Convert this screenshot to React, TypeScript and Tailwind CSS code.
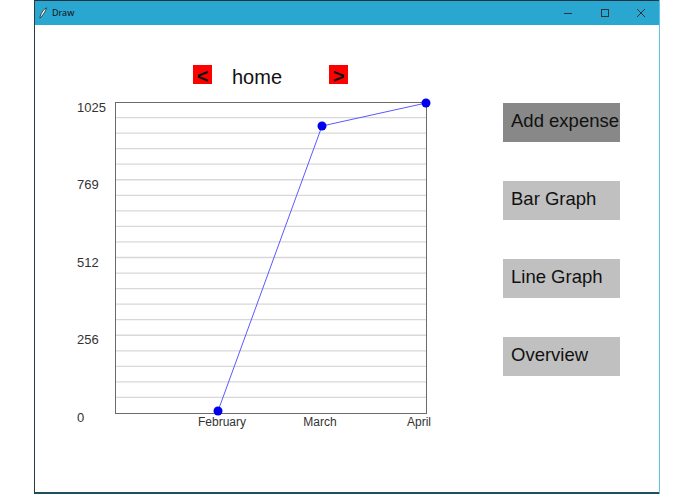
import React from "react";

const yLabels = [
  { text: "1025", y: 16.5 },
  { text: "769", y: 94 },
  { text: "512", y: 171.5 },
  { text: "256", y: 249 },
  { text: "0", y: 326.5 },
];

const months = [
  { text: "February", x: 162 },
  { text: "March", x: 260 },
  { text: "April", x: 359 },
];

const points = [
  { x: 158, y: 316 },
  { x: 262, y: 31 },
  { x: 366, y: 8 },
];

const sideButtons = [
  { label: "Add expense", active: true },
  { label: "Bar Graph", active: false },
  { label: "Line Graph", active: false },
  { label: "Overview", active: false },
];

function LineChart() {
  const top = 7;
  const bottom = 318;
  const left = 55;
  const right = 366;
  const step = (bottom - top) / 20;
  const grid = Array.from({ length: 19 }, (_, i) => top + step * (i + 1));

  return (
    <svg width="380" height="335" className="block" style={{ fontFamily: '"Liberation Sans", Arial, sans-serif' }}>
      {grid.map((y) => (
        <line key={y} x1={left} x2={right} y1={y} y2={y} stroke="#d8d8d8" strokeWidth="1.3" />
      ))}
      <rect x={left + 0.5} y={top + 0.5} width={right - left} height={bottom - top} fill="none" stroke="#6b6b6b" strokeWidth="1" />
      {yLabels.map((l) => (
        <text key={l.text} x="17" y={l.y} fontSize="13" fill="#333">
          {l.text}
        </text>
      ))}
      {months.map((m) => (
        <text key={m.text} x={m.x} y="331" fontSize="12" fill="#333" textAnchor="middle">
          {m.text}
        </text>
      ))}
      <polyline
        points={points.map((p) => `${p.x},${p.y}`).join(" ")}
        fill="none"
        stroke="#5a5aff"
        strokeWidth="1"
      />
      {points.map((p) => (
        <circle key={p.x} cx={p.x} cy={p.y} r="4.5" fill="#0000ee" />
      ))}
    </svg>
  );
}

export default function App() {
  return (
    <div className="w-[695px] h-[494px] bg-white overflow-hidden" style={{ fontFamily: '"Liberation Sans", Arial, sans-serif' }}>
      <div className="ml-[34px] w-[626px] h-[494px] flex flex-col border-l border-l-[#2b3a40] border-r border-r-[#5ec4e0]">
        {/* Title bar */}
        <div className="h-[25px] shrink-0 bg-[#2aa7d0] border-t border-t-[#1e3440] flex items-center">
          <svg width="10" height="12" viewBox="0 0 10 12" className="ml-[3px]">
            <path d="M8.5 0.8 C6 2 3.5 5 2.2 9.5 L2 11.2 L3.2 10 C5.5 7 7.8 4 8.5 0.8 Z" fill="#fff" stroke="#222" strokeWidth="0.8" />
          </svg>
          <span className="ml-[4px] text-[9px] text-[#111]" style={{ fontFamily: '"Noto Sans", sans-serif' }}>
            Draw
          </span>
          <div className="ml-auto flex items-center h-full">
            <div className="w-[36px] h-full flex items-center justify-center">
              <div className="w-[8px] h-px bg-[#333]" />
            </div>
            <div className="w-[37px] h-full flex items-center justify-center">
              <div className="w-[8px] h-[8px] border border-[#333]" />
            </div>
            <div className="w-[36px] h-full flex items-center justify-center">
              <svg width="10" height="10" viewBox="0 0 10 10">
                <path d="M1 1 L9 9 M9 1 L1 9" stroke="#333" strokeWidth="1" />
              </svg>
            </div>
          </div>
        </div>

        {/* Content */}
        <div className="flex-1 bg-white flex border-b-2 border-b-[#1f4e5c]">
          <div className="w-[405px] pl-[25px] pt-[40px] flex flex-col">
            <div className="h-[19px] flex items-center pl-[133px]">
              <div className="w-[19px] h-[19px] bg-[#ff0000] flex items-center justify-center pt-[3px] text-[20px] font-bold leading-none text-[#111]">
                &lt;
              </div>
              <div className="w-[117px] pl-[20px] pt-[4px] text-[20px] leading-none text-[#111]">home</div>
              <div className="w-[19px] h-[19px] bg-[#ff0000] flex items-center justify-center pt-[3px] text-[20px] font-bold leading-none text-[#111]">
                &gt;
              </div>
            </div>
            <div className="mt-[11px]">
              <LineChart />
            </div>
          </div>
          <div className="ml-[63px] pt-[78px] flex flex-col gap-[39px]">
            {sideButtons.map((b) => (
              <div
                key={b.label}
                className={`w-[117px] h-[39px] flex items-center pl-[8px] pb-[3px] text-[18.5px] text-[#111] whitespace-nowrap ${
                  b.active ? "bg-[#888888]" : "bg-[#c0c0c0]"
                }`}
              >
                {b.label}
              </div>
            ))}
          </div>
        </div>
      </div>
    </div>
  );
}
